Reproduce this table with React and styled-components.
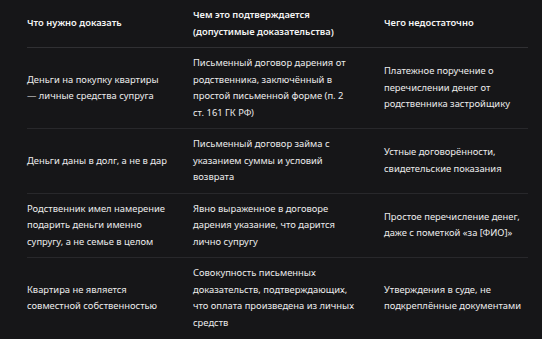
import styled, { createGlobalStyle } from 'styled-components';

const GlobalStyle = createGlobalStyle`
    html, body {
        margin: 0;
        padding: 0;
        background: #161618;
    }
    body {
        font-family: "Noto Sans", "Open Sans", sans-serif;
    }
`;

const Page = styled.div`
    padding: 0 14px 0 27px;
`;

const Table = styled.table`
    width: 501px;
    border-collapse: collapse;
    table-layout: fixed;
    font-size: 9.4px;
    line-height: 16.5px;
    color: #ececec;

    col.c1{ width: 166px; }
    col.c2{ width: 191px; }
    col.c3{ width: 144px; }
`;

const Head = styled.th`
    text-align: left;
    font-weight: 600;
    color: #f4f4f4;
    padding: 7px 26px 7px 0;
    vertical-align: middle;
    border-bottom: 1.5px solid #303033;

    &:nth-child(2){
        padding-right: 28px;
    }

    &:last-child{
        padding-right: 0;
    }
`;

const Row = styled.tr`
    border-bottom: 1px solid #28282b;

    &:last-child{
        border-bottom: none;
    }
`;

const Cell = styled.td`
    padding: 7px 26px 7px 0;
    vertical-align: middle;

    &:nth-child(2){
        padding-right: 28px;
    }

    &:last-child{
        padding-right: 0;
    }
`;

const rows = [
    [
        'Деньги на покупку квартиры — личные средства супруга',
        'Письменный договор дарения от родственника, заключённый в простой письменной форме (п. 2 ст. 161 ГК РФ)',
        'Платежное поручение о перечислении денег от родственника застройщику',
    ],
    [
        'Деньги даны в долг, а не в дар',
        'Письменный договор займа с указанием суммы и условий возврата',
        'Устные договорённости, свидетельские показания',
    ],
    [
        'Родственник имел намерение подарить деньги именно супругу, а не семье в целом',
        'Явно выраженное в договоре дарения указание, что дарится лично супругу',
        'Простое перечисление денег, даже с пометкой «за [ФИО]»',
    ],
    [
        'Квартира не является совместной собственностью',
        'Совокупность письменных доказательств, подтверждающих, что оплата произведена из личных средств',
        'Утверждения в суде, не подкреплённые документами',
    ],
];

const App = () => {
    return (
        <Page>
            <GlobalStyle />
            <Table>
                <colgroup>
                    <col className="c1" />
                    <col className="c2" />
                    <col className="c3" />
                </colgroup>
                <thead>
                    <tr>
                        <Head>Что нужно доказать</Head>
                        <Head>Чем это подтверждается (допустимые доказательства)</Head>
                        <Head>Чего недостаточно</Head>
                    </tr>
                </thead>
                <tbody>
                    {
                        rows.map((r, i) => (
                            <Row key={i}>
                                {r.map((t, j) => <Cell key={j}>{t}</Cell>)}
                            </Row>
                        ))
                    }
                </tbody>
            </Table>
        </Page>
    )
}

export default App
